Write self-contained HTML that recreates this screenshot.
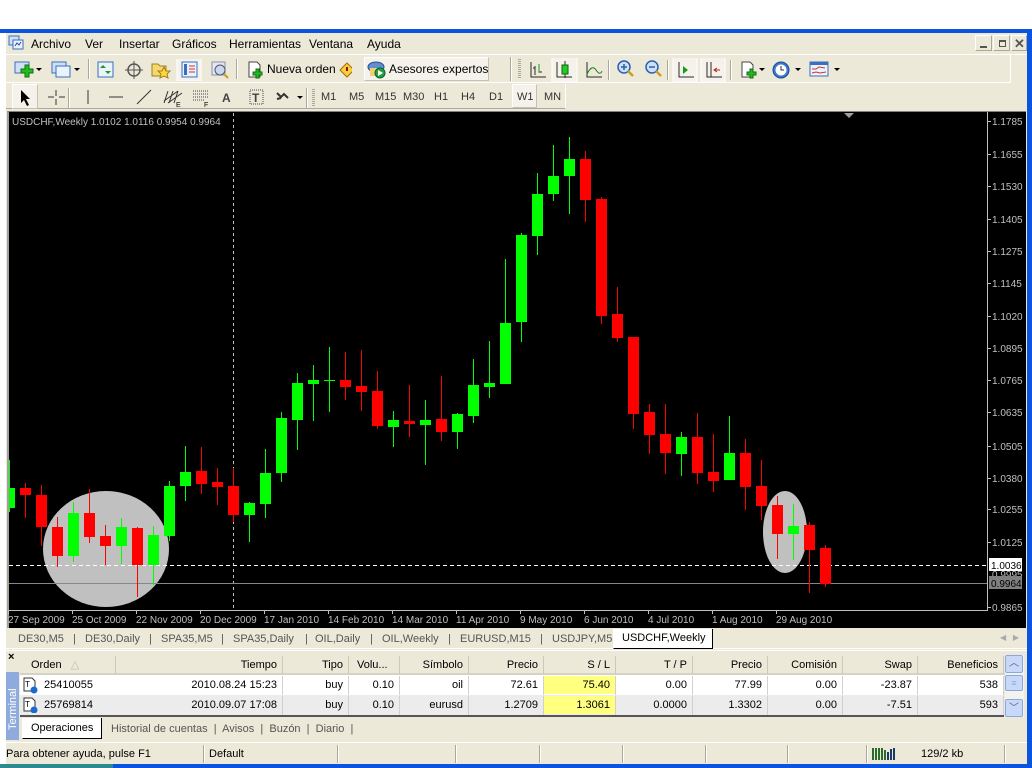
<!DOCTYPE html>
<html><head><meta charset="utf-8">
<style>
*{margin:0;padding:0;box-sizing:border-box}
body{width:1032px;height:768px;overflow:hidden;background:#fff;position:relative;font-family:"Liberation Sans",sans-serif;font-size:11px;color:#000}
.a{position:absolute}
.t{position:absolute;white-space:nowrap}
.tb{position:absolute;white-space:nowrap;top:633px;color:#555;font-size:11px}
.sep{position:absolute;width:2px;border-left:1px solid #aca899;border-right:1px solid #fff}
.grip{position:absolute;width:3px;background:repeating-linear-gradient(#aca899 0 1px,transparent 1px 2px)}
.hd{position:absolute;top:656px;height:18px;line-height:18px;text-align:right;border-right:1px solid #ccc9b8;padding-right:5px}
.c{position:absolute;height:19px;line-height:19px;text-align:right;padding-right:5px;border-right:1px solid #d4d0c8}
</style></head><body>
<div class="a" style="left:0;top:29px;width:1032px;height:4px;background:#0a54e0"></div>
<div class="a" style="left:1027px;top:29px;width:5px;height:739px;background:#0a54e0"></div>
<div class="a" style="left:0;top:764px;width:1032px;height:4px;background:#0a54e0"></div>
<div class="a" style="left:0;top:764px;width:113px;height:4px;background:#2d8a8f"></div>
<div class="a" style="left:6px;top:33px;width:1021px;height:731px;background:#ece9d8"></div>
<svg class="a" style="left:8px;top:35px" width="17" height="16"><rect x="1" y="1" width="10" height="9" fill="#cfe0f5" stroke="#3a6fc0"/><rect x="5" y="5" width="10" height="9" fill="#eaf2fc" stroke="#3a6fc0"/><path d="M7 11l2-3 2 2 2-3" stroke="#2050a0" fill="none"/></svg>
<div class="t" style="left:31px;top:37px;font-size:12px">Archivo</div>
<div class="t" style="left:85px;top:37px;font-size:12px">Ver</div>
<div class="t" style="left:119px;top:37px;font-size:12px">Insertar</div>
<div class="t" style="left:172px;top:37px;font-size:12px">Gráficos</div>
<div class="t" style="left:229px;top:37px;font-size:12px">Herramientas</div>
<div class="t" style="left:309px;top:37px;font-size:12px">Ventana</div>
<div class="t" style="left:367px;top:37px;font-size:12px">Ayuda</div>
<div class="a" style="left:975px;top:35px;width:17px;height:16px;border:1px solid #fff;border-right-color:#aca899;border-bottom-color:#aca899"></div>
<div class="a" style="left:993px;top:35px;width:17px;height:16px;border:1px solid #fff;border-right-color:#aca899;border-bottom-color:#aca899"></div>
<div class="a" style="left:1011px;top:35px;width:16px;height:16px;border:1px solid #fff;border-right-color:#aca899;border-bottom-color:#aca899"></div>
<div class="a" style="left:980px;top:46px;width:7px;height:2px;background:#555"></div>
<div class="a" style="left:999px;top:40px;width:7px;height:7px;border:1px solid #555;border-top-width:2px;background:#ece9d8"></div>
<div class="t" style="left:1014px;top:36px;font-size:13px;font-weight:bold;color:#555">✕</div>
<div class="a" style="left:6px;top:54px;width:1021px;height:1px;background:#fff"></div>
<div class="a" style="left:6px;top:55px;width:1005px;height:28px;border-bottom:1px solid #fff;border-right:1px solid #fff"></div>
<svg class="a" style="left:12px;top:59px" width="340" height="22">
<rect x="3" y="3" width="14" height="11" fill="#cfe0f5" stroke="#3a6fc0"/><path d="M9 10h4v-4h4v4h4v4h-4v4h-4v-4h-4z" fill="#22bb22" stroke="#107010"/><path d="M24 9l3 3 3-3z" fill="#000"/>
<rect x="40" y="3" width="14" height="11" fill="#cfe0f5" stroke="#3a6fc0"/><rect x="44" y="7" width="14" height="11" fill="#eaf2fc" stroke="#3a6fc0"/><path d="M62 9l3 3 3-3z" fill="#000"/>
<rect x="86" y="3" width="15" height="15" fill="#eaf2fc" stroke="#3a6fc0"/><path d="M91 6l3 3h-6zM96 15l3-3h-6z" fill="#1a9a1a"/>
<circle cx="122" cy="11" r="6" fill="none" stroke="#555" stroke-width="1.5"/><path d="M122 2v18M113 11h18" stroke="#555"/>
<path d="M140 5h6l2 2h6v10h-14z" fill="#f5d76e" stroke="#a08020"/><path d="M152 8l2 4h4l-3 3 1 4-4-2-4 2 1-4-3-3h4z" fill="#ffd83a" stroke="#a08020"/>
<rect x="165" y="-1" width="24" height="23" fill="#f4f2ea" stroke="#fff"/><rect x="170" y="3" width="15" height="15" fill="#eaf2fc" stroke="#3a6fc0"/><rect x="172" y="5" width="3" height="11" fill="#3a6fc0"/><path d="M177 7h6M177 10h6M177 13h6" stroke="#c33"/>
<rect x="200" y="3" width="13" height="13" fill="#e6e6f2" stroke="#8890b0"/><circle cx="208" cy="11" r="5" fill="#c8d8f0" stroke="#556"/><path d="M212 15l4 4" stroke="#c8a020" stroke-width="2"/>
<path d="M237 3h8l3 3v12h-11z" fill="#fff" stroke="#444"/><path d="M241 13h3v-3h3v3h3v3h-3v3h-3v-3h-3z" fill="#22bb22" stroke="#107010"/>
<path d="M335 4l7 7-7 7-7-7z" fill="#f8d040" stroke="#a07000"/><path d="M335 8v4" stroke="#a00" stroke-width="2"/>
</svg>
<div class="sep" style="left:88px;top:59px;height:20px"></div>
<div class="sep" style="left:236px;top:59px;height:20px"></div>
<div class="t" style="left:267px;top:62px;font-size:12px">Nueva orden</div>
<div class="a" style="left:364px;top:57px;width:125px;height:24px;background:#f4f2ea;border:1px solid #fff;border-right-color:#c5c2b2;border-bottom-color:#c5c2b2"></div>
<svg class="a" style="left:367px;top:59px" width="20" height="20"><ellipse cx="9" cy="8" rx="8" ry="5" fill="#5f8fd0" stroke="#2a4f90"/><rect x="3" y="9" width="12" height="8" fill="#f0d070"/><circle cx="13" cy="14" r="5" fill="#20a040" stroke="#106020"/><path d="M11 11l5 3-5 3z" fill="#fff"/></svg>
<div class="t" style="left:389px;top:62px;font-size:12px">Asesores expertos</div>
<div class="sep" style="left:510px;top:57px;height:24px"></div>
<div class="grip" style="left:518px;top:59px;height:20px"></div>
<svg class="a" style="left:525px;top:58px" width="330" height="24">
<path d="M6 4v15h15M10 8v9M10 10h-2M14 8v6h3" stroke="#2a2a2a" fill="none"/><path d="M14 6v8" stroke="#1a9a1a"/>
<rect x="27" y="-1" width="25" height="25" fill="#f4f2ea" stroke="#fff"/><path d="M32 4v15h15M40 3v17" stroke="#2a2a2a" fill="none"/><rect x="37" y="7" width="6" height="9" fill="#22cc22" stroke="#106010"/>
<path d="M62 4v15h15" stroke="#2a2a2a" fill="none"/><path d="M62 16q5-10 9-4t6 1" stroke="#1a7a1a" fill="none"/>
<circle cx="99" cy="9" r="6" fill="#cfe0fa" stroke="#2a5fb0" stroke-width="1.5"/><path d="M96 9h6M99 6v6" stroke="#2a5fb0" stroke-width="1.5"/><path d="M103 13l5 5" stroke="#c8a020" stroke-width="2.5"/>
<circle cx="127" cy="9" r="6" fill="#cfe0fa" stroke="#2a5fb0" stroke-width="1.5"/><path d="M124 9h6" stroke="#2a5fb0" stroke-width="1.5"/><path d="M131 13l5 5" stroke="#c8a020" stroke-width="2.5"/>
<rect x="148" y="-1" width="24" height="25" fill="#f4f2ea" stroke="#fff"/><path d="M154 4v15h15" stroke="#2a2a2a" fill="none"/><path d="M158 8l5 4-5 4z" fill="#1a9a1a"/>
<rect x="176" y="-1" width="24" height="25" fill="#f4f2ea" stroke="#fff"/><path d="M182 4v15h15M186 4v15" stroke="#2a2a2a" fill="none"/><path d="M190 12h5M192 10l-3 2 3 2" stroke="#b02020" fill="none"/>
<path d="M217 4h8l3 3v12h-11z" fill="#fff" stroke="#444"/><path d="M222 14h3v-3h3v3h3v3h-3v3h-3v-3h-3z" fill="#22bb22" stroke="#107010"/><path d="M234 10l3 3 3-3z" fill="#000"/>
<circle cx="256" cy="12" r="8" fill="#3a78d0" stroke="#1a4a90"/><circle cx="256" cy="12" r="5.5" fill="#fff"/><path d="M256 8v4h3" stroke="#333" fill="none"/><path d="M270 10l3 3 3-3z" fill="#000"/>
<rect x="285" y="4" width="18" height="14" fill="#eaf2fc" stroke="#3a6fc0"/><rect x="285" y="4" width="18" height="3" fill="#3a6fc0"/><path d="M287 11h4l3-2 6 1M287 15l4-1 4 1 6-1" stroke="#c33" fill="none"/><path d="M309 10l3 3 3-3z" fill="#000"/>
</svg>
<div class="sep" style="left:608px;top:60px;height:20px"></div>
<div class="sep" style="left:667px;top:60px;height:20px"></div>
<div class="sep" style="left:730px;top:60px;height:20px"></div>
<div class="a" style="left:6px;top:84px;width:560px;height:25px;border-right:1px solid #fff;border-bottom:1px solid #aca899"></div>
<div class="a" style="left:12px;top:84px;width:26px;height:25px;background:#f4f2ea;border:1px solid #fff;border-right-color:#c5c2b2;border-bottom-color:#c5c2b2"></div>
<svg class="a" style="left:12px;top:85px" width="300" height="24">
<path d="M9 5v13l3-3 3 6 2-1-3-6h4z" fill="#000"/>
<path d="M44 5v6M44 14v6M36 12h6M47 12h6" stroke="#333"/>
<path d="M76 5v14" stroke="#333"/>
<path d="M97 12h14" stroke="#333"/>
<path d="M125 19l14-14" stroke="#333"/>
<path d="M152 16l14-10M156 18l14-10M156 6l-4 12M161 6l-4 12M166 6l-4 12" stroke="#333"/><text x="164" y="22" font-size="7" font-family="Liberation Sans">E</text>
<path d="M181 6h16M181 9h16M181 12h16M181 15h12" stroke="#444" stroke-dasharray="1 1"/><text x="192" y="22" font-size="7" font-family="Liberation Sans">F</text>
<text x="210" y="17" font-size="12" font-weight="bold" fill="#444" font-family="Liberation Sans">A</text>
<rect x="238" y="5" width="13" height="14" fill="none" stroke="#444" stroke-dasharray="1 1"/><text x="240" y="17" font-size="12" font-weight="bold" fill="#444" font-family="Liberation Sans">T</text>
<path d="M265 8l4 4 3-3 4 4M265 14l4-1" stroke="#333" fill="none" stroke-width="2"/><path d="M285 11l3 3 3-3z" fill="#000"/>
</svg>
<div class="sep" style="left:68px;top:88px;height:20px"></div>
<div class="sep" style="left:306px;top:88px;height:20px"></div>
<div class="grip" style="left:312px;top:89px;height:18px"></div>
<div class="t" style="left:321px;top:91px;color:#333">M1</div>
<div class="t" style="left:349px;top:91px;color:#333">M5</div>
<div class="t" style="left:375px;top:91px;color:#333">M15</div>
<div class="t" style="left:403px;top:91px;color:#333">M30</div>
<div class="t" style="left:434px;top:91px;color:#333">H1</div>
<div class="t" style="left:461px;top:91px;color:#333">H4</div>
<div class="t" style="left:489px;top:91px;color:#333">D1</div>
<div class="a" style="left:512px;top:84px;width:25px;height:24px;background:#f4f2ea;border:1px solid #fff;border-right-color:#c5c2b2;border-bottom-color:#c5c2b2"></div>
<div class="t" style="left:517px;top:91px;color:#333">W1</div>
<div class="t" style="left:544px;top:91px;color:#333">MN</div>
<div class="a" style="left:7px;top:111px;width:1019px;height:517px;background:#000;border-top:1px solid #808080;border-left:2px solid #a0a0a0"></div>
<svg class="a" style="left:0;top:0" width="1032" height="768">
<ellipse cx="106" cy="549" rx="63" ry="58" fill="#c0c0c0"/>
<ellipse cx="785" cy="532" rx="22" ry="41" fill="#c0c0c0"/>
<path d="M233.5 113V610" stroke="#c0c0c0" stroke-dasharray="3 3"/>
<path d="M9 565.5H987" stroke="#fff" stroke-dasharray="4 3"/>
<path d="M9 583.5H987" stroke="#808890"/>
<path d="M987.5 112V610.5H9" stroke="#c0c0c0" fill="none"/>
<path d="M844 113h10l-5 5z" fill="#a0a0a0"/>
<g stroke="#00ff00">
<path d="M9.5 460V512M73.5 502V562M121.5 518V564M153.5 526V585M169.5 481V541M185.5 446V501M249.5 502V542M265.5 449V518M281.5 412V482M297.5 373V450M313.5 365V421M329.5 347V412M393.5 411V447M425.5 400V465M457.5 413V449M473.5 359V423M489.5 341V398M505.5 259V384M521.5 233V342M537.5 173V255M553.5 145V201M569.5 137V214M681.5 432V476M729.5 416V480M793.5 504V560"/>
</g>
<g fill="#00ff00">
<rect x="9" y="488" width="6" height="20"/><rect x="68" y="513" width="11" height="43"/><rect x="116" y="527" width="11" height="19"/><rect x="148" y="535" width="11" height="30"/><rect x="164" y="486" width="11" height="50"/><rect x="180" y="472" width="11" height="14"/><rect x="244" y="503" width="11" height="12"/><rect x="260" y="473" width="11" height="31"/><rect x="276" y="418" width="11" height="55"/><rect x="292" y="383" width="11" height="37"/><rect x="308" y="380" width="11" height="4"/><rect x="324" y="380" width="11" height="1"/><rect x="388" y="420" width="11" height="7"/><rect x="420" y="420" width="11" height="5"/><rect x="452" y="414" width="11" height="18"/><rect x="468" y="385" width="11" height="31"/><rect x="484" y="383" width="11" height="4"/><rect x="500" y="323" width="11" height="61"/><rect x="516" y="235" width="11" height="87"/><rect x="532" y="194" width="11" height="42"/><rect x="548" y="176" width="11" height="18"/><rect x="564" y="159" width="11" height="17"/><rect x="676" y="437" width="11" height="17"/><rect x="724" y="453" width="11" height="27"/><rect x="788" y="526" width="11" height="8"/>
</g>
<g stroke="#ff0000">
<path d="M25.5 483V518M41.5 485V546M57.5 517V567M89.5 489V543M105.5 525V565M137.5 527V597M201.5 447V494M217.5 468V505M233.5 468V522M345.5 352V400M361.5 350V411M377.5 371V429M409.5 385V437M441.5 376V441M585.5 151V222M601.5 197V324M617.5 287V342M633.5 337V429M649.5 404V454M665.5 404V474M697.5 413V484M713.5 434V492M745.5 439V510M761.5 460V520M777.5 496V559M809.5 522V593M825.5 545V587"/>
</g>
<g fill="#ff0000">
<rect x="20" y="488" width="11" height="7"/><rect x="36" y="495" width="11" height="32"/><rect x="52" y="527" width="11" height="29"/><rect x="84" y="513" width="11" height="24"/><rect x="100" y="536" width="11" height="10"/><rect x="132" y="528" width="11" height="37"/><rect x="196" y="471" width="11" height="13"/><rect x="212" y="482" width="11" height="5"/><rect x="228" y="486" width="11" height="29"/><rect x="340" y="380" width="11" height="7"/><rect x="356" y="386" width="11" height="6"/><rect x="372" y="391" width="11" height="35"/><rect x="404" y="421" width="11" height="3"/><rect x="436" y="419" width="11" height="13"/><rect x="580" y="159" width="11" height="41"/><rect x="596" y="199" width="11" height="117"/><rect x="612" y="314" width="11" height="24"/><rect x="628" y="337" width="11" height="77"/><rect x="644" y="412" width="11" height="23"/><rect x="660" y="434" width="11" height="19"/><rect x="692" y="437" width="11" height="36"/><rect x="708" y="472" width="11" height="9"/><rect x="740" y="453" width="11" height="34"/><rect x="756" y="486" width="11" height="20"/><rect x="772" y="505" width="11" height="29"/><rect x="804" y="525" width="11" height="25"/><rect x="820" y="548" width="11" height="36"/>
</g>
<g stroke="#c0c0c0">
<path d="M987 121.5h4M987 154.5h4M987 186.5h4M987 219.5h4M987 251.5h4M987 283.5h4M987 316.5h4M987 348.5h4M987 380.5h4M987 412.5h4M987 446.5h4M987 478.5h4M987 509.5h4M987 542.5h4M987 607.5h4"/>
<path d="M8.5 610v4M72.5 610v4M136.5 610v4M200.5 610v4M264.5 610v4M328.5 610v4M392.5 610v4M456.5 610v4M520.5 610v4M584.5 610v4M648.5 610v4M712.5 610v4M776.5 610v4"/>
</g>
<g fill="#c0c0c0" font-family="Liberation Sans" font-size="10">
<text x="12" y="125">USDCHF,Weekly  1.0102 1.0116 0.9954 0.9964</text>
<text x="992" y="125">1.1785</text><text x="992" y="158">1.1655</text><text x="992" y="190">1.1530</text><text x="992" y="223">1.1405</text><text x="992" y="255">1.1275</text><text x="992" y="287">1.1145</text><text x="992" y="320">1.1020</text><text x="992" y="352">1.0895</text><text x="992" y="384">1.0765</text><text x="992" y="416">1.0635</text><text x="992" y="450">1.0505</text><text x="992" y="482">1.0380</text><text x="992" y="513">1.0255</text><text x="992" y="546">1.0125</text><text x="992" y="578">0.9995</text><text x="992" y="611">0.9865</text>
<text x="8" y="623">27 Sep 2009</text><text x="72" y="623">25 Oct 2009</text><text x="136" y="623">22 Nov 2009</text><text x="200" y="623">20 Dec 2009</text><text x="264" y="623">17 Jan 2010</text><text x="328" y="623">14 Feb 2010</text><text x="392" y="623">14 Mar 2010</text><text x="456" y="623">11 Apr 2010</text><text x="520" y="623">9 May 2010</text><text x="584" y="623">6 Jun 2010</text><text x="648" y="623">4 Jul 2010</text><text x="712" y="623">1 Aug 2010</text><text x="776" y="623">29 Aug 2010</text>
</g>
<rect x="989" y="558" width="33" height="13" fill="#fff"/><text x="991" y="569" font-family="Liberation Sans" font-size="10" fill="#000">1.0036</text>
<rect x="989" y="576" width="33" height="13" fill="#808080"/><text x="991" y="587" font-family="Liberation Sans" font-size="10" fill="#000">0.9964</text>
</svg>
<div class="a" style="left:6px;top:628px;width:1021px;height:21px;border-bottom:1px solid #fff"></div>
<div class="tb" style="left:18px">DE30,M5</div><div class="tb" style="left:73px">|</div>
<div class="tb" style="left:85px">DE30,Daily</div><div class="tb" style="left:149px">|</div>
<div class="tb" style="left:161px">SPA35,M5</div><div class="tb" style="left:221px">|</div>
<div class="tb" style="left:233px">SPA35,Daily</div><div class="tb" style="left:305px">|</div>
<div class="tb" style="left:315px">OIL,Daily</div><div class="tb" style="left:370px">|</div>
<div class="tb" style="left:382px">OIL,Weekly</div><div class="tb" style="left:448px">|</div>
<div class="tb" style="left:460px">EURUSD,M15</div><div class="tb" style="left:540px">|</div>
<div class="tb" style="left:552px">USDJPY,M5</div>
<div class="a" style="left:613px;top:629px;width:100px;height:20px;background:#fff;border:1px solid #000;border-top:none;border-left-color:#fff"></div>
<div class="t" style="left:622px;top:632px">USDCHF,Weekly</div>
<div class="t" style="left:1000px;top:633px;color:#aaa;font-size:8px">◀ &nbsp; ▶</div>
<div class="a" style="left:6px;top:650px;width:1021px;height:1px;background:#fff"></div>
<div class="t" style="left:8px;top:651px;font-size:11px;font-weight:bold">×</div>
<div class="a" style="left:6px;top:672px;width:13px;height:68px;background:#8faadc"></div>
<div class="t" style="left:-12px;top:699px;transform:rotate(-90deg);color:#fff;font-size:11px;width:50px">Terminal</div>
<div class="a" style="left:20px;top:655px;width:1004px;height:20px;background:#ece9d8;border-bottom:2px solid #d6d2c2"></div>
<div class="hd" style="left:20px;width:96px;text-align:left;padding-left:11px">Orden &nbsp; <span style="color:#bbb">△</span></div>
<div class="hd" style="left:116px;width:167px">Tiempo</div>
<div class="hd" style="left:283px;width:66px">Tipo</div>
<div class="hd" style="left:349px;width:51px;text-align:left;padding-left:8px">Volu...</div>
<div class="hd" style="left:400px;width:69px">Símbolo</div>
<div class="hd" style="left:469px;width:75px">Precio</div>
<div class="hd" style="left:544px;width:72px">S / L</div>
<div class="hd" style="left:616px;width:77px">T / P</div>
<div class="hd" style="left:693px;width:75px">Precio</div>
<div class="hd" style="left:768px;width:75px">Comisión</div>
<div class="hd" style="left:843px;width:75px">Swap</div>
<div class="hd" style="left:918px;width:86px">Beneficios</div>
<div class="a" style="left:20px;top:675px;width:984px;height:20px;background:#fff"></div>
<div class="a" style="left:20px;top:695px;width:984px;height:20px;background:#ececec"></div>
<div class="a" style="left:20px;top:715px;width:984px;height:2px;background:#555"></div>
<div class="a" style="left:544px;top:676px;width:72px;height:18px;background:#ffff80"></div>
<div class="a" style="left:544px;top:696px;width:72px;height:18px;background:#ffff80"></div>
<svg class="a" style="left:23px;top:677px" width="16" height="36"><g><path d="M1 1h8l3 3v10h-11z" fill="#fff" stroke="#333"/><text x="2" y="10" font-size="8" font-family="Liberation Sans">T</text><circle cx="11" cy="13" r="3.5" fill="#1a6ad0"/></g><g transform="translate(0,20)"><path d="M1 1h8l3 3v10h-11z" fill="#fff" stroke="#333"/><text x="2" y="10" font-size="8" font-family="Liberation Sans">T</text><circle cx="11" cy="13" r="3.5" fill="#1a6ad0"/></g></svg>
<div class="t" style="left:44px;top:679px">25410055</div>
<div class="t" style="left:44px;top:699px">25769814</div>
<div class="c" style="left:116px;top:676px;width:167px">2010.08.24 15:23</div>
<div class="c" style="left:283px;top:676px;width:66px">buy</div>
<div class="c" style="left:349px;top:676px;width:51px">0.10</div>
<div class="c" style="left:400px;top:676px;width:69px">oil</div>
<div class="c" style="left:469px;top:676px;width:75px">72.61</div>
<div class="c" style="left:544px;top:676px;width:72px">75.40</div>
<div class="c" style="left:616px;top:676px;width:77px">0.00</div>
<div class="c" style="left:693px;top:676px;width:75px">77.99</div>
<div class="c" style="left:768px;top:676px;width:75px">0.00</div>
<div class="c" style="left:843px;top:676px;width:75px">-23.87</div>
<div class="c" style="left:918px;top:676px;width:86px">538</div>
<div class="c" style="left:116px;top:696px;width:167px">2010.09.07 17:08</div>
<div class="c" style="left:283px;top:696px;width:66px">buy</div>
<div class="c" style="left:349px;top:696px;width:51px">0.10</div>
<div class="c" style="left:400px;top:696px;width:69px">eurusd</div>
<div class="c" style="left:469px;top:696px;width:75px">1.2709</div>
<div class="c" style="left:544px;top:696px;width:72px">1.3061</div>
<div class="c" style="left:616px;top:696px;width:77px">0.0000</div>
<div class="c" style="left:693px;top:696px;width:75px">1.3302</div>
<div class="c" style="left:768px;top:696px;width:75px">0.00</div>
<div class="c" style="left:843px;top:696px;width:75px">-7.51</div>
<div class="c" style="left:918px;top:696px;width:86px">593</div>
<div class="a" style="left:1005px;top:655px;width:19px;height:62px;background:#f3f3ee"></div>
<div class="a" style="left:1005px;top:655px;width:18px;height:18px;background:#c8d8f8;border:1px solid #8aa8e0;border-radius:2px;text-align:center;font-size:10px;color:#4d6185;line-height:16px">︿</div>
<div class="a" style="left:1005px;top:675px;width:18px;height:16px;background:#c8d8f8;border:1px solid #8aa8e0;border-radius:2px;text-align:center;font-size:9px;color:#8aa8e0;line-height:14px">≡</div>
<div class="a" style="left:1005px;top:699px;width:18px;height:18px;background:#c8d8f8;border:1px solid #8aa8e0;border-radius:2px;text-align:center;font-size:10px;color:#4d6185;line-height:18px">﹀</div>
<div class="a" style="left:22px;top:718px;width:80px;height:21px;background:#fff;border:1px solid #000;border-top:none;border-left-color:#fff"></div>
<div class="t" style="left:31px;top:722px">Operaciones</div>
<div class="t" style="left:111px;top:723px;color:#555">Historial de cuentas &nbsp;|&nbsp; Avisos &nbsp;|&nbsp; Buzón &nbsp;|&nbsp; Diario &nbsp;|</div>
<div class="a" style="left:6px;top:742px;width:1021px;height:1px;background:#fff"></div>
<div class="t" style="left:6px;top:748px">Para obtener ayuda, pulse F1</div>
<div class="sep" style="left:203px;top:745px;height:18px"></div>
<div class="t" style="left:209px;top:748px">Default</div>
<div class="sep" style="left:337px;top:745px;height:18px"></div>
<div class="sep" style="left:455px;top:745px;height:18px"></div>
<div class="sep" style="left:539px;top:745px;height:18px"></div>
<div class="sep" style="left:622px;top:745px;height:18px"></div>
<div class="sep" style="left:705px;top:745px;height:18px"></div>
<div class="sep" style="left:787px;top:745px;height:18px"></div>
<div class="sep" style="left:866px;top:745px;height:18px"></div>
<svg class="a" style="left:872px;top:748px" width="26" height="13"><g fill="#2a6a2a"><rect x="0" y="0" width="2" height="12"/><rect x="3" y="0" width="2" height="12"/><rect x="6" y="0" width="2" height="12"/><rect x="9" y="0" width="2" height="12"/><rect x="12" y="2" width="2" height="10"/><rect x="15" y="4" width="2" height="8" fill="#1a3a6a"/><rect x="18" y="1" width="2" height="11" fill="#1a3a6a"/><rect x="21" y="0" width="2" height="12" fill="#1a3a6a"/></g></svg>
<div class="t" style="left:921px;top:748px">129/2 kb</div>
<div class="sep" style="left:1004px;top:745px;height:18px"></div>
</body></html>
